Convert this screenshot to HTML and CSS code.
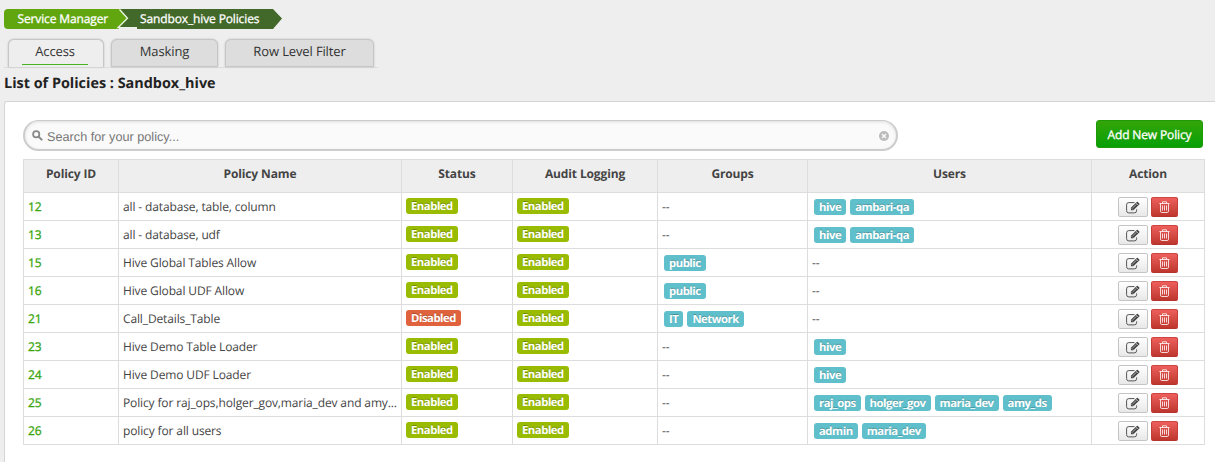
FILE: index.html
```html
<!DOCTYPE html>
<html lang="en">
<head>
<meta charset="utf-8">
<title>Sandbox_hive Policies</title>
<link rel="stylesheet" href="styles.css">
</head>
<body>
<svg class="defs" aria-hidden="true">
  <symbol id="edit" viewBox="0 0 14 13">
    <path d="M8.500 1.600H2.800A2.200 2.200 0 0 0 .6 3.800v5.900a2.200 2.200 0 0 0 2.200 2.200h5.600a2.200 2.200 0 0 0 2.200-2.200V8.300" fill="none" stroke="#555" stroke-width="1"/>
    <path d="M4.900 9.200V6.800L10.800 1.100q.5-.5 1 0l1.500 1.300q.5.5 0 1L7.300 9.200z" fill="#444"/>
    <path d="M6.800 6.900 10.500 3.200M10 1.900l2.200 2.200M5.600 7.200l1.300 1.300" stroke="#eee" stroke-width=".6"/>
  </symbol>
  <symbol id="trash" viewBox="0 0 11 12">
    <path d="M.4 2.500h10.200M3.500 2.500V.8h4v1.700M1.500 2.800v7.300q0 1.400 1.300 1.400h5.400q1.300 0 1.300-1.400V2.800M3.500 4.500v5M5.500 4.500v5M7.500 4.500v5" fill="none" stroke="#fff" stroke-opacity=".8" stroke-width="1"/>
  </symbol>
</svg>
<nav class="crumbs">
  <svg class="crumb-shape" width="280" height="20" viewBox="0 0 280 20">
    <path d="M113 0h156l9 9.500-9 10.500H133v-1.700H113z" fill="#43692a"/>
    <path d="M113 0h3.500l7.500 9.400-8.500 9.400-2.500 1.200z" fill="#62a60f"/>
    <path d="M4 0h111v20H4q-4 0-4-4V4q0-4 4-4z" fill="#62a60f"/>
    <path d="M115.500.5l8 8.800-9.500 9.300h19" fill="none" stroke="#eef2e8" stroke-width="1.300"/>
  </svg>
  <a class="crumb">Service Manager</a><a class="crumb">Sandbox_hive Policies</a>
</nav>
<div class="tabs">
  <a class="tab active"><span>Access</span></a>
  <a class="tab masking"><span>Masking</span></a>
  <a class="tab filter"><span>Row Level Filter</span></a>
</div>
<h1 class="title">List of Policies : Sandbox_hive</h1>
<main class="panel">
  <div class="toolbar">
    <div class="search">
      <svg class="glass" width="11" height="11" viewBox="0 0 12 12"><circle cx="4.600" cy="4.600" r="3.400" fill="none" stroke="#888" stroke-width="1.900"/><path d="M7.200 7.200l3.300 3.300" stroke="#888" stroke-width="2.200" stroke-linecap="round"/></svg>
      <span class="placeholder">Search for your policy...</span>
      <svg class="clear" width="10" height="10" viewBox="0 0 10 10"><circle cx="5" cy="5" r="5" fill="#bbb"/><path d="M3 3l4 4M7 3l-4 4" stroke="#fafafa" stroke-width="1.400"/></svg>
    </div>
    <a class="add">Add New Policy</a>
  </div>
  <table class="grid">
    <colgroup><col class="c-id"><col class="c-name"><col class="c-status"><col class="c-audit"><col class="c-groups"><col class="c-users"><col class="c-action"></colgroup>
    <thead><tr><th>Policy ID</th><th>Policy Name</th><th>Status</th><th>Audit Logging</th><th>Groups</th><th>Users</th><th>Action</th></tr></thead>
    <tbody>
      <tr><td class="id">12</td><td>all - database, table, column</td><td><span class="label on">Enabled</span></td><td><span class="label on">Enabled</span></td><td>--</td><td><div class="tags"><span class="label">hive</span><span class="label">ambari-qa</span></div></td><td><div class="actions"><a class="btn"><svg class="i-edit"><use href="#edit"/></svg></a><a class="btn danger"><svg class="i-trash"><use href="#trash"/></svg></a></div></td></tr>
      <tr><td class="id">13</td><td>all - database, udf</td><td><span class="label on">Enabled</span></td><td><span class="label on">Enabled</span></td><td>--</td><td><div class="tags"><span class="label">hive</span><span class="label">ambari-qa</span></div></td><td><div class="actions"><a class="btn"><svg class="i-edit"><use href="#edit"/></svg></a><a class="btn danger"><svg class="i-trash"><use href="#trash"/></svg></a></div></td></tr>
      <tr><td class="id">15</td><td>Hive Global Tables Allow</td><td><span class="label on">Enabled</span></td><td><span class="label on">Enabled</span></td><td><div class="tags"><span class="label">public</span></div></td><td>--</td><td><div class="actions"><a class="btn"><svg class="i-edit"><use href="#edit"/></svg></a><a class="btn danger"><svg class="i-trash"><use href="#trash"/></svg></a></div></td></tr>
      <tr><td class="id">16</td><td>Hive Global UDF Allow</td><td><span class="label on">Enabled</span></td><td><span class="label on">Enabled</span></td><td><div class="tags"><span class="label">public</span></div></td><td>--</td><td><div class="actions"><a class="btn"><svg class="i-edit"><use href="#edit"/></svg></a><a class="btn danger"><svg class="i-trash"><use href="#trash"/></svg></a></div></td></tr>
      <tr><td class="id">21</td><td>Call_Details_Table</td><td><span class="label off">Disabled</span></td><td><span class="label on">Enabled</span></td><td><div class="tags"><span class="label">IT</span><span class="label">Network</span></div></td><td>--</td><td><div class="actions"><a class="btn"><svg class="i-edit"><use href="#edit"/></svg></a><a class="btn danger"><svg class="i-trash"><use href="#trash"/></svg></a></div></td></tr>
      <tr><td class="id">23</td><td>Hive Demo Table Loader</td><td><span class="label on">Enabled</span></td><td><span class="label on">Enabled</span></td><td>--</td><td><div class="tags"><span class="label">hive</span></div></td><td><div class="actions"><a class="btn"><svg class="i-edit"><use href="#edit"/></svg></a><a class="btn danger"><svg class="i-trash"><use href="#trash"/></svg></a></div></td></tr>
      <tr><td class="id">24</td><td>Hive Demo UDF Loader</td><td><span class="label on">Enabled</span></td><td><span class="label on">Enabled</span></td><td>--</td><td><div class="tags"><span class="label">hive</span></div></td><td><div class="actions"><a class="btn"><svg class="i-edit"><use href="#edit"/></svg></a><a class="btn danger"><svg class="i-trash"><use href="#trash"/></svg></a></div></td></tr>
      <tr><td class="id">25</td><td>Policy for raj_ops,holger_gov,maria_dev and amy...</td><td><span class="label on">Enabled</span></td><td><span class="label on">Enabled</span></td><td>--</td><td><div class="tags"><span class="label">raj_ops</span><span class="label">holger_gov</span><span class="label">maria_dev</span><span class="label">amy_ds</span></div></td><td><div class="actions"><a class="btn"><svg class="i-edit"><use href="#edit"/></svg></a><a class="btn danger"><svg class="i-trash"><use href="#trash"/></svg></a></div></td></tr>
      <tr><td class="id">26</td><td>policy for all users</td><td><span class="label on">Enabled</span></td><td><span class="label on">Enabled</span></td><td>--</td><td><div class="tags"><span class="label">admin</span><span class="label">maria_dev</span></div></td><td><div class="actions"><a class="btn"><svg class="i-edit"><use href="#edit"/></svg></a><a class="btn danger"><svg class="i-trash"><use href="#trash"/></svg></a></div></td></tr>
    </tbody>
  </table>
</main>
</body>
</html>
```
FILE: styles.css
```css
* { box-sizing: border-box; }
body {
  margin: 0;
  height: 462px;
  overflow: hidden;
  display: flex;
  flex-direction: column;
  background: #eee;
  color: #444;
  font: 12px/18px "Open Sans", sans-serif;
  letter-spacing: -.13px;
  text-rendering: geometricPrecision;
}
.defs { position: absolute; width: 0; height: 0; }
.crumbs {
  position: relative;
  height: 29px;
  padding: 9px 0 0 17.500px;
  display: flex;
  gap: 32px;
  flex: none;
}
.crumb-shape { position: absolute; left: 4px; top: 9px; }
.crumb {
  position: relative;
  color: #fff;
  font-size: 12px;
  -webkit-text-stroke: .3px #fff;
  line-height: 20px;
  white-space: nowrap;
}
.tabs {
  flex: none;
  display: flex;
  gap: 7px;
  width: 374px;
  height: 39px;
  margin-left: 4px;
  padding: 10px 0 0 4px;
  border-bottom: 1px solid #ddd;
}
.tab {
  display: flex;
  justify-content: center;
  height: 28px;
  border: 1px solid #c6c6c6;
  border-radius: 6px 6px 0 0;
  background: #ddd;
  box-shadow: 0 0 2px #bbb;
  color: #333;
  font-size: 13px;
  line-height: 23px;
  white-space: nowrap;
}
.active { width: 96px; background: #eee; border-bottom: 0; }
.active span { width: 66px; height: 25px; margin-right: 2px; border-bottom: 1px solid #44b51f; text-align: center; }
.masking { width: 107px; }
.filter { width: 149px; }
.title {
  flex: none;
  margin: 0 0 0 4px;
  height: 33px;
  color: #222;
  font-size: 14.400px;
  font-weight: 700;
  letter-spacing: 0;
  line-height: 31px;
}
.panel {
  flex: 1;
  margin-left: 4px;
  padding: 18px 0 0 18px;
  background: #fff;
  border: 1px solid #d5d5d5;
  border-right: 0;
  border-bottom: 0;
  border-top-left-radius: 3px;
}
.toolbar { display: flex; justify-content: space-between; width: 1180px; height: 39px; }
.search {
  display: flex;
  align-items: center;
  width: 875px;
  height: 31px;
  padding: 1px 7px 0 7px;
  border: 1px solid #ccc;
  border-width: 1px 2px 2px;
  border-radius: 16px;
  background: #fafafa;
  box-shadow: inset 0 1px 3px #ddd;
}
.placeholder {
  flex: 1;
  margin-left: 4px;
  padding-top: 2px;
  color: #777;
  font: 12.700px/18px "Liberation Sans", Arial, sans-serif;
  letter-spacing: 0;
}
.add {
  width: 107px;
  height: 28px;
  border: 1px solid #1d9a05;
  border-radius: 3px;
  background: linear-gradient(#35a508, #06a006);
  color: #fff;
  font-size: 12px;
  -webkit-text-stroke: .3px #fff;
  line-height: 28px;
  text-align: center;
  white-space: nowrap;
}
.grid {
  width: 1182px;
  table-layout: fixed;
  border-collapse: separate;
  border-spacing: 0;
  border: solid #ddd;
  border-width: 1px 0 0 1px;
}
.c-id { width: 95px; }
.c-name { width: 283px; }
.c-status { width: 111px; }
.c-audit { width: 145px; }
.c-groups { width: 150px; }
.c-users { width: 284px; }
.c-action { width: 113px; }
.grid th, .grid td {
  border: solid #ddd;
  border-width: 0 1px 1px 0;
  white-space: nowrap;
}
.grid th {
  height: 33px;
  padding: 0 0 4px;
  background: #eee;
  color: #444;
  font-weight: 700;
}
.grid td { height: 28px; padding: 0 4px; }
.grid .id { color: #38a50b; -webkit-text-stroke: .3px #38a50b; }
.label {
  display: block;
  width: max-content;
  height: 16px;
  padding: 0 5px;
  border-radius: 3px;
  background: #5fbfca;
  color: #fff;
  font-size: 11.300px;
  font-weight: 700;
  letter-spacing: -.46px;
  line-height: 17px;
  text-shadow: 0 -1px 0 rgba(0,0,0,.25);
}
.on { background: #9b0; margin-bottom: 1px; }
.off { background: #e0633d; margin-bottom: 1px; }
.tags { display: flex; gap: 4px; padding: 1px 0 0 2px; }
.actions { display: flex; gap: 3px; justify-content: center; padding-top: 1px; }
.btn {
  display: flex;
  align-items: center;
  justify-content: center;
  width: 30px;
  height: 20px;
  border: 1px solid #c4c4c4;
  border-radius: 2px;
  background: linear-gradient(#fff, #e8e8e8);
}
.danger {
  width: 27px;
  border-color: #cf4440 #c63d38 #b5342e;
  background: linear-gradient(#ed5f5b, #be372f);
}
.i-edit { width: 14px; height: 13px; }
.i-trash { width: 11px; height: 12px; }
```
